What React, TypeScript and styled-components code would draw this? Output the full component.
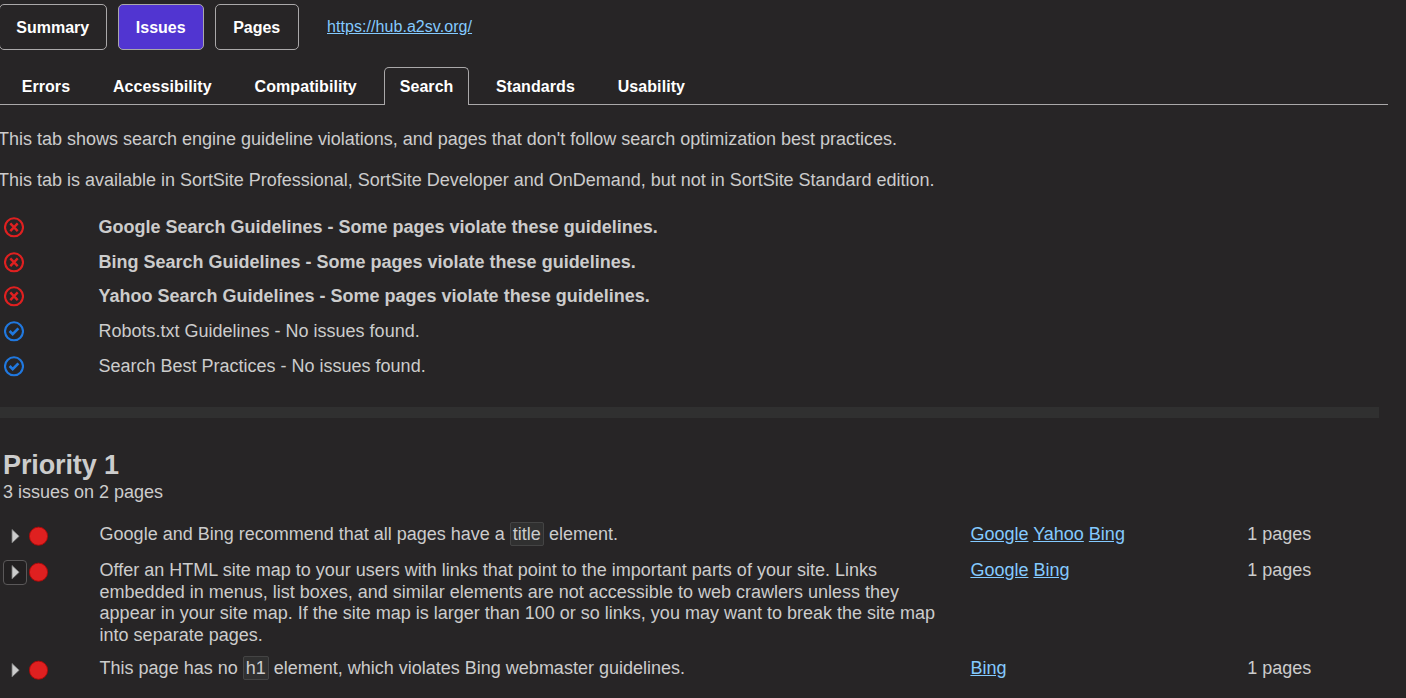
import React from "react";
import styled, { createGlobalStyle } from "styled-components";

const GlobalStyle = createGlobalStyle`
  * { box-sizing: border-box; }
  body {
    margin: 0;
    background: #272526;
    color: #cccccc;
    font: 18px/21.6px "Liberation Sans", Arial, sans-serif;
    overflow: hidden;
  }
`;

const Page = styled.main`
  height: 698px;
  overflow: hidden;
`;

const NavBar = styled.nav`
  display: flex;
  align-items: center;
  gap: 11px;
  height: 50px;
  padding-top: 4px;
  margin-left: -1px;
`;

const NavButton = styled.button<{ $width: number; $active?: boolean }>`
  width: ${(p) => p.$width}px;
  height: 46px;
  padding: 2px 0.6px 0 0;
  border: 1px solid #aaa8a9;
  border-radius: 5px;
  background: ${(p) => (p.$active ? "#5135d1" : "transparent")};
  color: #fff;
  font: bold 16px/20px "Liberation Sans", Arial, sans-serif;
`;

const Link = styled.a`
  color: #84caff;
  text-decoration: underline;
`;

const SiteLink = styled(Link)`
  margin-left: 17px;
  font-size: 16px;
  letter-spacing: 0.06px;
`;

const TabBar = styled.div`
  display: flex;
  align-items: flex-end;
  gap: 10.85px;
  width: 1388px;
  height: 38px;
  margin-top: 17px;
  padding-left: 5.7px;
  box-shadow: inset 0 -1px 0 #aaa8a9;
`;

const Tab = styled.div<{ $active?: boolean }>`
  height: 38px;
  padding: 9px ${(p) => (p.$active ? 14.7 : 15)}px 0 15px;
  border: 1px solid ${(p) => (p.$active ? "#aaa8a9" : "transparent")};
  border-bottom: 0;
  border-radius: 5px 5px 0 0;
  background: ${(p) => (p.$active ? "#272526" : "transparent")};
  color: #fff;
  font: bold 16px/20px "Liberation Sans", Arial, sans-serif;
  letter-spacing: 0.07px;
`;

const Intro = styled.div`
  margin: 24px 0 0 -2px;
  white-space: nowrap;
  letter-spacing: -0.008px;
`;

const Paragraph = styled.p`
  margin: 0 0 19.4px;
`;

const GuidelineList = styled.div`
  display: grid;
  grid-auto-rows: 34.7px;
  padding-left: 4px;
  margin-top: -0.5px;
`;

const Guideline = styled.div<{ $failed: boolean }>`
  display: grid;
  grid-template-columns: 94.5px 1fr;
  align-items: center;
  font-weight: ${(p) => (p.$failed ? "bold" : "normal")};
`;

const StatusSvg = styled.svg`
  display: block;
  width: 20px;
  height: 21px;
  margin-top: -0.6px;
`;

const Divider = styled.div`
  width: 1379px;
  height: 11px;
  margin-top: 23.4px;
  background: #303030;
`;

const PriorityHeader = styled.header`
  margin: 31px 0 0 3px;
`;

const Title = styled.h2`
  margin: 0 0 1px;
  font-size: 27px;
  line-height: 32px;
  letter-spacing: -0.12px;
`;

const IssueList = styled.div`
  display: grid;
  gap: 11.7px;
  margin-top: 20px;
`;

const Issue = styled.div`
  display: grid;
  grid-template-columns: 96.6px 870.8px 276.8px 120px;
  align-items: start;
  min-height: 24.4px;
  padding-left: 3px;
`;

const IssueMarks = styled.div`
  display: flex;
  align-items: center;
  gap: 2px;
  height: 26px;
  margin: -0.7px 0 -5px;
`;

const Expander = styled.button<{ $focused?: boolean }>`
  display: grid;
  place-items: center;
  width: 24px;
  height: 25px;
  padding: 0 0 0 1px;
  border: 1px solid ${(p) => (p.$focused ? "#5a5859" : "transparent")};
  border-radius: 4px;
  background: ${(p) => (p.$focused ? "#222021" : "transparent")};
`;

const Description = styled.div`
  width: 845px;
`;

const Code = styled.code`
  padding: 1px 2px;
  border: 1px solid #444;
  border-radius: 2px;
  background: #303030;
  font-family: inherit;
`;

const StatusIcon = ({ failed }: { failed: boolean }) => (
  <StatusSvg viewBox="0 0 20 21" fill="none" stroke={failed ? "#df2020" : "#2078df"}>
    <circle cx="10" cy="10.3" r="9" strokeWidth="2.1" />
    {failed ? (
      <path d="M6.3 6.4l7.4 7.8M13.7 6.4l-7.4 7.8" strokeWidth="2.4" />
    ) : (
      <path d="M5.6 10l3.1 3.1 5.7-5.7" strokeWidth="2.7" />
    )}
  </StatusSvg>
);

const Arrow = () => (
  <svg width="10" height="16" viewBox="0 0 10 16">
    <path d="M1 1.4L8.2 8.2 1 15z" fill="#ccc" stroke="#777" strokeWidth=".8" />
  </svg>
);

const Dot = () => (
  <svg width="20" height="20" viewBox="0 0 20 20">
    <circle cx="9.5" cy="10.2" r="9.1" fill="#df2020" stroke="#a90909" strokeWidth=".9" />
  </svg>
);

const tabs = ["Errors", "Accessibility", "Compatibility", "Search", "Standards", "Usability"];

const guidelines = [
  { text: "Google Search Guidelines - Some pages violate these guidelines.", failed: true },
  { text: "Bing Search Guidelines - Some pages violate these guidelines.", failed: true },
  { text: "Yahoo Search Guidelines - Some pages violate these guidelines.", failed: true },
  { text: "Robots.txt Guidelines - No issues found.", failed: false },
  { text: "Search Best Practices - No issues found.", failed: false },
];

const issues = [
  {
    text: <>Google and Bing recommend that all pages have a <Code>title</Code> element.</>,
    sources: ["Google", "Yahoo", "Bing"],
  },
  {
    text: "Offer an HTML site map to your users with links that point to the important parts of your site. Links embedded in menus, list boxes, and similar elements are not accessible to web crawlers unless they appear in your site map. If the site map is larger than 100 or so links, you may want to break the site map into separate pages.",
    sources: ["Google", "Bing"],
    focused: true,
  },
  {
    text: <>This page has no <Code>h1</Code> element, which violates Bing webmaster guidelines.</>,
    sources: ["Bing"],
  },
];

export default function App() {
  return (
    <Page>
      <GlobalStyle />
      <NavBar>
        <NavButton $width={108}>Summary</NavButton>
        <NavButton $width={86} $active>Issues</NavButton>
        <NavButton $width={84}>Pages</NavButton>
        <SiteLink href="#">https://hub.a2sv.org/</SiteLink>
      </NavBar>
      <TabBar>
        {tabs.map((tab) => (
          <Tab key={tab} $active={tab === "Search"}>{tab}</Tab>
        ))}
      </TabBar>
      <Intro>
        <Paragraph>This tab shows search engine guideline violations, and pages that don't follow search optimization best practices.</Paragraph>
        <Paragraph>This tab is available in SortSite Professional, SortSite Developer and OnDemand, but not in SortSite Standard edition.</Paragraph>
      </Intro>
      <GuidelineList>
        {guidelines.map((g) => (
          <Guideline key={g.text} $failed={g.failed}>
            <StatusIcon failed={g.failed} />
            <span>{g.text}</span>
          </Guideline>
        ))}
      </GuidelineList>
      <Divider />
      <PriorityHeader>
        <Title>Priority 1</Title>
        <div>3 issues on 2 pages</div>
      </PriorityHeader>
      <IssueList>
        {issues.map((issue, i) => (
          <Issue key={i}>
            <IssueMarks>
              <Expander $focused={issue.focused} aria-label="Expand"><Arrow /></Expander>
              <Dot />
            </IssueMarks>
            <Description>{issue.text}</Description>
            <div>
              {issue.sources.map((s) => (
                <React.Fragment key={s}><Link href="#">{s}</Link>{" "}</React.Fragment>
              ))}
            </div>
            <div>1 pages</div>
          </Issue>
        ))}
      </IssueList>
    </Page>
  );
}
